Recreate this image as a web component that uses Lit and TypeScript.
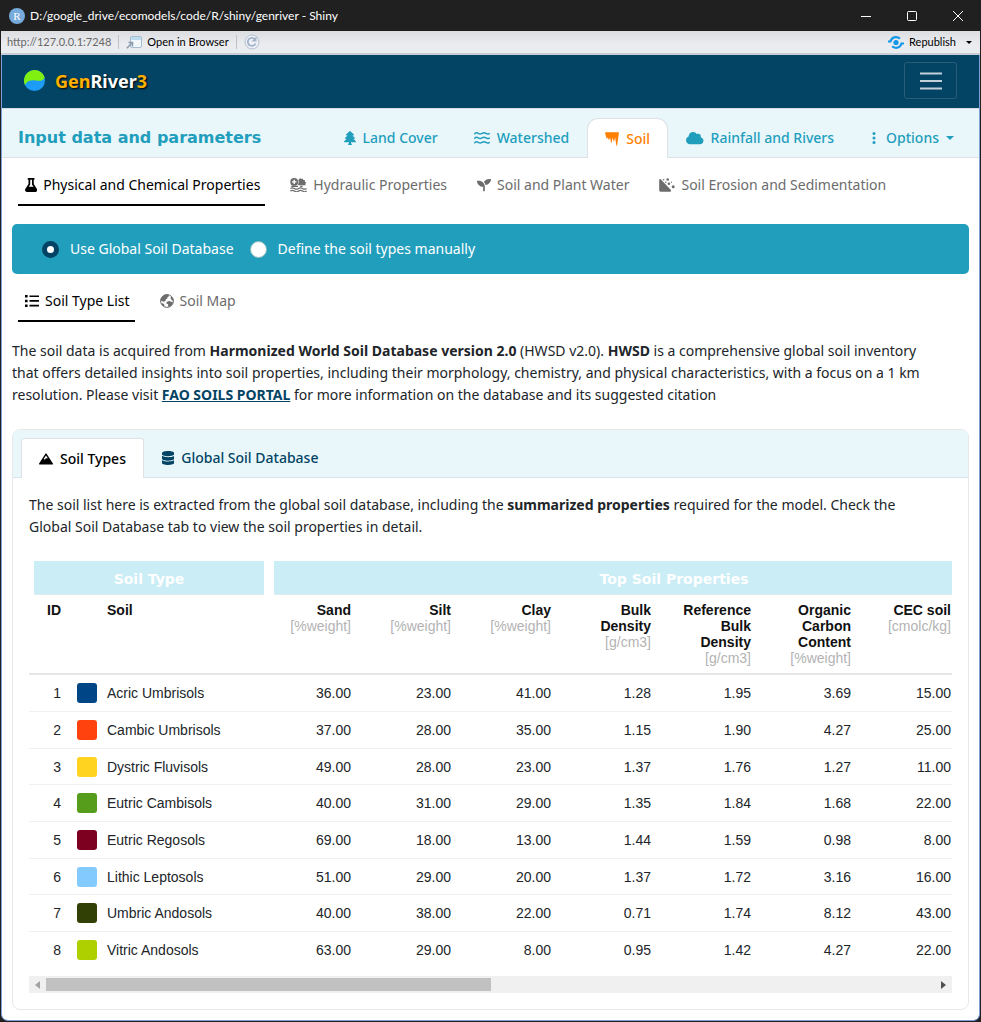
import { LitElement, html, svg, css } from "lit";
import { customElement, property } from "lit/decorators.js";
import { styleMap } from "lit/directives/style-map.js";

const ICONS: Record<string, { box: string; body: unknown }> = {
  tree: {
    box: "0 0 438 512",
    body: svg`<path transform="scale(1.14 1)" d="M378.31 378.49L298.42 288h30.63c9.01 0 16.98-5 20.78-13.06 3.8-8.04 2.55-17.26-3.28-24.05L268.42 160h28.89c9.1 0 17.3-5.35 20.86-13.61 3.52-8.13 1.86-17.59-4.24-24.08L203.66 4.83c-6.03-6.45-17.28-6.45-23.32 0L70.06 122.31c-6.1 6.49-7.75 15.95-4.24 24.08C69.38 154.65 77.59 160 86.69 160h28.89l-78.14 90.91c-5.81 6.78-7.06 15.99-3.27 24.04C37.97 283 45.93 288 54.95 288h30.63L5.69 378.49c-6 6.79-7.36 16.09-3.56 24.26 3.75 8.05 12 13.25 21.01 13.25H160v24.45l-30.29 48.4c-5.32 10.64 2.42 23.16 14.31 23.16h95.96c11.89 0 19.63-12.52 14.31-23.16L224 440.45V416h136.86c9.01 0 17.26-5.2 21.01-13.25 3.8-8.17 2.44-17.47-3.56-24.26z"/>`,
  },
  water: {
    box: "0 0 16 14",
    body: svg`<g fill="none" stroke="currentColor" stroke-width="1.5"><path d="M.3 3.200C1.700 1.500 2.900 1.500 4.200 2.400S6.700 3.300 8 2.400 10.600 1.500 11.900 2.400 14.400 3.300 15.700 2.200"/><path d="M.3 7.700C1.700 6 2.900 6 4.200 6.900S6.700 7.800 8 6.900 10.600 6 11.900 6.900 14.400 7.800 15.700 6.700"/><path d="M.3 12.200C1.700 10.500 2.900 10.500 4.200 11.400S6.700 12.300 8 11.400 10.600 10.500 11.900 11.400 14.400 12.300 15.700 11.200"/></g>`,
  },
  icicles: {
    box: "0 0 14 14",
    body: svg`<path d="M.7.300H13.300C13.800.300 14 .7 13.900 1.100L12.100 13.500C12 14 11.500 14 11.400 13.500L10.100 5.500 9.200 8.700C9.100 9.200 8.600 9.200 8.500 8.700L7.700 5.600 6.700 10.500C6.600 11 6.100 11 6 10.500L5.100 5.600 4.300 7.600C4.200 8 3.700 8 3.600 7.600L2.900 5.500 2.300 6.300C2 6.600 1.700 6.500 1.600 6.200L0 1.100C0 .7.300.300.7.300Z"/>`,
  },
  cloud: {
    box: "0 0 640 512",
    body: svg`<path d="M537.6 226.6c4.1-10.700 6.400-22.400 6.400-34.600 0-53-43-96-96-96-19.700 0-38.100 6-53.300 16.200C367 64.200 315.300 32 256 32c-88.400 0-160 71.600-160 160 0 2.700.1 5.400.2 8.100C40.200 219.800 0 273.200 0 336c0 79.500 64.500 144 144 144h368c70.700 0 128-57.300 128-128 0-61.900-44-113.600-102.400-125.400z"/>`,
  },
  dots: {
    box: "0 0 9 14",
    body: svg`<circle cx="4" cy="2.500" r="1.500"/><circle cx="4" cy="7" r="1.500"/><circle cx="4" cy="11.500" r="1.500"/>`,
  },
  flask: {
    box: "0 0 448 512",
    body: svg`<path d="M437.2 403.500L320 215V64h8c13.300 0 24-10.700 24-24V24c0-13.300-10.700-24-24-24H120c-13.300 0-24 10.700-24 24v16c0 13.300 10.700 24 24 24h8v151L10.800 403.500C-18.500 450.600 15.300 512 70.900 512h306.200c55.700 0 89.400-61.500 60.100-108.500zM137.900 320l48.200-77.600c3.700-5.200 5.800-11.600 5.800-18.400V64h64v160c0 6.900 2.200 13.200 5.800 18.400l48.200 77.600H137.900z"/>`,
  },
  hydraulic: {
    box: "0 0 17 14",
    body: svg`<path fill-rule="evenodd" d="M4.200 0A3.900 3.900 0 1 1 4.200 7.800 3.900 3.900 0 0 1 4.200 0ZM3.500 1.700V3.200H2V4.600H3.500V6.100H4.900V4.600H6.400V3.200H4.900V1.700Z"/><path d="M8.800 1.200 10 .3 11.300 1 12.700.5 13.300 1.900 15 2.300 14.900 3.700 16.300 4.500 15.400 5.700 15.600 7.200H8.600L7.900 6.500 8.700 4.500 8.400 2.500Z"/><path d="M1.600 7.700H8V9H1.200ZM10.200 7.700H12.600V9H10.200Z"/><path fill="none" stroke="currentColor" stroke-width="1.200" d="M.4 10.500c1.400-1 2.600-1 4 0s2.700 1 4.100 0 2.700-1 4.100 0 2.600 1 4 0M.4 13.100c1.400-1 2.600-1 4 0s2.700 1 4.100 0 2.700-1 4.100 0 2.600 1 4 0"/>`,
  },
  seedling: {
    box: "0 0 512 512",
    body: svg`<path d="M64 96H0c0 123.700 100.300 224 224 224v144c0 8.800 7.200 16 16 16h32c8.800 0 16-7.200 16-16V320C288 196.300 187.700 96 64 96zm384-64c-84.200 0-157.400 46.500-195.700 115.200 27.700 30.200 48.200 66.900 59 107.600C424 243.100 512 147.900 512 32h-64z"/>`,
  },
  erosion: {
    box: "0 0 16 14",
    body: svg`<path d="M.2 1.800C.2.900 1.100.700 1.700 1.300L11.700 11.700C12.500 12.600 12.100 13.700 11 13.700H1.600C.8 13.700.2 13.100.2 12.300Z"/><circle cx="4.600" cy="1.700" r=".8"/><circle cx="8.700" cy="1.500" r="1.300"/><circle cx="6.700" cy="4.300" r=".8"/><circle cx="9.900" cy="5.800" r="1.300"/><circle cx="14.200" cy="8.800" r="1.500"/><circle cx="12.400" cy="4.200" r=".6"/>`,
  },
  list: {
    box: "0 -1 14 14",
    body: svg`<path d="M0 0h2.600v2.600H0ZM0 4.700h2.600v2.600H0ZM0 9.400h2.600V12H0ZM4.500.4H14v1.700H4.500ZM4.500 5.100H14v1.700H4.500ZM4.500 9.800H14v1.700H4.500Z"/>`,
  },
  globe: {
    box: "0 0 14 14",
    body: svg`<circle cx="7" cy="7" r="6.400" fill="none" stroke="currentColor" stroke-width="1"/><path d="M.6 6.400C.9 3 3.700.500 7 .5L8.900.8 8.700 2.600 7.300 3.400 7.200 4.800 5.800 5.300 5.600 6.800 4 7.700 2.400 7.300ZM11.300 2 13.300 5.300 13.400 7 11.800 6.200 10.600 4.600ZM1.200 9.500 3 9.300 4.300 10.600 4.400 12.700 2.600 11.700ZM6.500 8 9.200 6.900 11.300 7.800 13.200 8.600 11.500 11.600 8.900 13 7.900 11.700 8.300 10.200 6.600 9.700Z"/>`,
  },
  mountain: {
    box: "0 -64 640 640",
    body: svg`<path d="M634.920 462.700l-288-448C341.030 5.540 330.890 0 320 0s-21.030 5.540-26.920 14.700l-288 448a32.001 32.001 0 0 0-1.170 32.640A32.004 32.004 0 0 0 32 512h576c11.710 0 22.480-6.390 28.090-16.670a31.983 31.983 0 0 0-1.170-32.630zM320 91.180L405.390 224H320l-64 64-38.060-38.060L320 91.180z"/>`,
  },
  database: {
    box: "0 0 448 512",
    body: svg`<path d="M448 73.143v45.714C448 159.143 347.667 192 224 192S0 159.143 0 118.857V73.143C0 32.857 100.333 0 224 0s224 32.857 224 73.143zM448 176v102.857C448 319.143 347.667 352 224 352S0 319.143 0 278.857V176c48.125 33.143 136.208 48.572 224 48.572S399.874 209.143 448 176zm0 160v102.857C448 479.143 347.667 512 224 512S0 479.143 0 438.857V336c48.125 33.143 136.208 48.572 224 48.572S399.874 369.143 448 336z"/>`,
  },
};

@customElement("ui-icon")
export class UiIcon extends LitElement {
  @property() name = "";
  static styles = css`
    :host { display: inline-flex; flex: none; height: 14px; }
    svg { display: block; height: 100%; width: auto; fill: currentColor; }
  `;
  render() {
    const icon = ICONS[this.name];
    return icon ? html`<svg viewBox=${icon.box} aria-hidden="true">${icon.body}</svg>` : null;
  }
}

interface Soil { name: string; color: string; values: string[] }

const SOILS: Soil[] = [
  { name: "Acric Umbrisols", color: "#004586", values: ["36.00", "23.00", "41.00", "1.28", "1.95", "3.69", "15.00"] },
  { name: "Cambic Umbrisols", color: "#ff420e", values: ["37.00", "28.00", "35.00", "1.15", "1.90", "4.27", "25.00"] },
  { name: "Dystric Fluvisols", color: "#ffd320", values: ["49.00", "28.00", "23.00", "1.37", "1.76", "1.27", "11.00"] },
  { name: "Eutric Cambisols", color: "#579d1c", values: ["40.00", "31.00", "29.00", "1.35", "1.84", "1.68", "22.00"] },
  { name: "Eutric Regosols", color: "#7e0021", values: ["69.00", "18.00", "13.00", "1.44", "1.59", "0.98", "8.00"] },
  { name: "Lithic Leptosols", color: "#83caff", values: ["51.00", "29.00", "20.00", "1.37", "1.72", "3.16", "16.00"] },
  { name: "Umbric Andosols", color: "#314004", values: ["40.00", "38.00", "22.00", "0.71", "1.74", "8.12", "43.00"] },
  { name: "Vitric Andosols", color: "#aecf00", values: ["63.00", "29.00", "8.00", "0.95", "1.42", "4.27", "22.00"] },
];

const COLUMNS = [
  ["Sand", "[%weight]"],
  ["Silt", "[%weight]"],
  ["Clay", "[%weight]"],
  ["Bulk Density", "[g/cm3]"],
  ["Reference Bulk Density", "[g/cm3]"],
  ["Organic Carbon Content", "[%weight]"],
  ["CEC soil", "[cmolc/kg]"],
];

@customElement("soil-table")
export class SoilTable extends LitElement {
  static styles = css`
    :host { display: block; font: 14px/16px "Liberation Sans", Arial, sans-serif; color: #212529; }
    .view { overflow: hidden; }
    table { border-collapse: collapse; table-layout: fixed; width: 1050px; }
    .c-id { width: 40px; }
    .c-swatch { width: 30px; }
    .c-soil { width: 170px; }
    .c-first { width: 90px; }
    .c-value { width: 100px; }
    .c-last { width: 120px; }
    th { padding: 0; vertical-align: top; }
    .group { padding: 0 5px; }
    .group span {
      display: block; padding: 10px 0 6px; line-height: 17px;
      background: #caedf6; border-bottom: 1px solid #dfe8ea; color: #fff;
      font-family: "Arial Black", "DejaVu Sans", sans-serif; font-weight: 900;
    }
    .labels th { padding: 7px 8px; text-align: right; color: #111; border-bottom: 2px solid #e6e6e6; }
    .labels .left { text-align: left; }
    .unit { display: block; font-weight: 400; color: #b3b3b3; }
    td { height: 36px; padding: 0 8px; text-align: right; border-bottom: 1px solid #f0f0f0; }
    tr:nth-child(3n) td { height: 35px; }
    tr:last-child td { border-bottom: 0; }
    .name { text-align: left; }
    .swatch { display: block; width: 20px; height: 20px; border-radius: 3px; }
    .bar { display: flex; align-items: center; height: 17px; margin-top: 8px; background: #f0f0f0; }
    .bar button { width: 17px; height: 17px; padding: 0; border: 0; background: none; display: grid; place-items: center; color: #505050; }
    .bar .prev { color: #a3a3a3; }
    .bar svg { width: 5px; height: 8px; fill: currentColor; }
    .track { flex: 1; }
    .thumb { width: 50%; height: 13px; background: #c1c1c1; }
  `;
  render() {
    return html`
      <div class="view">
        <table>
          <colgroup>
            <col class="c-id" /><col class="c-swatch" /><col class="c-soil" /><col class="c-first" />
            ${COLUMNS.slice(1).map(() => html`<col class="c-value" />`)}
            <col class="c-last" />
          </colgroup>
          <thead>
            <tr>
              <th class="group" colspan="3" scope="colgroup"><span>Soil Type</span></th>
              <th class="group" colspan="8" scope="colgroup"><span>Top Soil Properties</span></th>
            </tr>
            <tr class="labels">
              <th scope="col">ID</th>
              <th></th>
              <th class="left" scope="col">Soil</th>
              ${COLUMNS.map(([name, unit]) => html`<th scope="col">${name}<span class="unit">${unit}</span></th>`)}
              <th></th>
            </tr>
          </thead>
          <tbody>
            ${SOILS.map((soil, i) => html`<tr>
              <td>${i + 1}</td>
              <td><span class="swatch" style=${styleMap({ background: soil.color })}></span></td>
              <td class="name">${soil.name}</td>
              ${soil.values.map((v) => html`<td>${v}</td>`)}
              <td></td>
            </tr>`)}
          </tbody>
        </table>
      </div>
      <div class="bar">
        <button class="prev" aria-label="Scroll left"><svg viewBox="0 0 5 8"><path d="M5 0v8L0 4z" /></svg></button>
        <div class="track"><div class="thumb"></div></div>
        <button aria-label="Scroll right"><svg viewBox="0 0 5 8"><path d="M0 0v8l5-4z" /></svg></button>
      </div>
    `;
  }
}

@customElement("app-root")
export class AppRoot extends LitElement {
  static styles = css`
    :host {
      display: block; min-height: 100vh; box-sizing: border-box; background: #202020; color: #212529;
      font: 14px/22px "Noto Sans", "Open Sans", sans-serif;
    }
    * { box-sizing: border-box; }
    button { font: inherit; color: inherit; background: none; border: 0; padding: 0; }
    a { color: inherit; text-decoration: none; }
    p { margin: 0; }
    .titlebar { display: flex; align-items: center; height: 31px; padding-left: 9px; color: #fff; font: 12px/16px "Segoe UI", Lato, sans-serif; background: #202020; }
    .titlebar .r { width: 16px; height: 16px; margin-right: 5px; border-radius: 50%; background: #75aadb; text-align: center; font-family: "Liberation Serif", serif; font-size: 11px; }
    .titlebar .title { flex: 1; }
    .titlebar button { width: 46px; height: 31px; display: grid; place-items: center; }
    .titlebar svg { width: 12px; height: 12px; fill: none; stroke: #fff; }
    .toolbar { display: flex; align-items: center; height: 24px; padding: 0 8px 0 6px; margin: 0 1px; font: 11px/16px "Segoe UI", Lato, sans-serif; color: #000; background: linear-gradient(#dcdde0, #ebecef 60%, #ebecef); border-bottom: 2px solid #c9cdd6; }
    .toolbar .url { color: #666; }
    .toolbar .sep { width: 1px; height: 14px; background: #bfc1c5; margin: 0 7px; }
    .toolbar button { display: flex; align-items: center; gap: 5px; }
    .toolbar .fill { flex: 1; }
    .toolbar svg { display: block; }
    .caret { display: inline-block; border: 3px solid transparent; border-top-color: currentColor; border-bottom: 0; }
    .toolbar .caret { margin-left: 5px; }
    .page { margin: 0 1px 1px; border: 1px solid #7f9fd8; border-top: 0; border-radius: 0 0 7px 7px; background: #fff; padding-bottom: 10px; overflow: hidden; }
    .navbar { display: flex; align-items: center; justify-content: space-between; height: 53px; padding: 0 22px 2px; background: #034464; }
    .brand { display: flex; align-items: center; gap: 10px; font-size: 18px; font-weight: 700; color: #fff; text-shadow: 1px 1px 2px #000; }
    .brand em { font-style: normal; color: #ffb000; }
    .menu { width: 53px; height: 37px; border: 1px solid #285c78; border-radius: 3px; display: grid; place-items: center; }
    .header { display: flex; align-items: flex-end; justify-content: space-between; height: 50px; padding: 0 7px 0 16px; border-top: 1px solid #d8dde2; border-bottom: 1px solid #dee2e6; background: #e9f7fb; color: #229ebd; }
    h1 { margin: 0; font: 900 16px/38px "Arial Black", "DejaVu Sans", sans-serif; }
    .tabs { display: flex; font-weight: 500; }
    .tab { display: flex; align-items: center; gap: 7px; height: 39px; padding: 0 17px; border: 1px solid transparent; border-bottom: 0; }
    .tab.active { height: 40px; margin-bottom: -1px; border-color: #dee2e6; background: #fff; color: #ff7f00; border-radius: 11px 11px 0 0; }
    .header .caret { border-width: 4px; border-bottom: 0; }
    .underline { display: flex; gap: 18px; padding: 6px 16px 0; color: #6c6c6c; }
    .underline a { display: flex; align-items: center; gap: 6px; height: 42px; padding: 1px 5px 0 7px; border-bottom: 2px solid transparent; }
    .underline .on { color: #000; border-color: #000; }
    .banner { display: flex; align-items: center; height: 50px; margin: 18px 10px 0; padding-left: 30px; border-radius: 5px; background: #229ebd; color: #fff; }
    .banner label { display: flex; align-items: center; gap: 11px; margin-right: 16px; }
    .banner input { appearance: none; width: 17px; height: 17px; margin: 0; border: 1px solid #8bb; border-radius: 50%; background: #fff; }
    .banner input:checked { border: 5px solid #034464; }
    .intro { margin: 18px 40px 23px 10px; }
    .intro a { color: #034464; font-weight: 700; text-decoration: underline; }
    .card { margin: 0 10px; border: 1px solid #e6e9eb; border-radius: 8px; overflow: hidden; }
    .card-head { display: flex; align-items: flex-end; height: 48px; padding-left: 8px; border-bottom: 1px solid #d5e6eb; background: #e9f7fb; color: #034464; }
    .card-head .active { color: #000; border-radius: 3px 3px 0 0; }
    .card-body { padding: 16px; }
    .card-body p { margin: 0 20px 23px 0; }
  `;

  render() {
    return html`
      <div class="titlebar">
        <span class="r">R</span>
        <span class="title">D:/google_drive/ecomodels/code/R/shiny/genriver - Shiny</span>
        <button aria-label="Minimize"><svg viewBox="0 0 12 12"><path d="M1 6.500h10" /></svg></button>
        <button aria-label="Maximize"><svg viewBox="0 0 12 12"><rect x="1.500" y="1.500" width="9" height="9" rx="1" /></svg></button>
        <button aria-label="Close"><svg viewBox="0 0 12 12"><path d="M1 1l10 10M11 1L1 11" /></svg></button>
      </div>
      <div class="toolbar">
        <span class="url">http://127.0.0.1:7248</span><span class="sep"></span>
        <button>
          <svg width="16" height="13" viewBox="0 0 16 13"><rect x="4.500" y=".5" width="11" height="11" rx="1.500" fill="#f2f7fb" stroke="#a9bdd0" /><path d="M5 1h10v3H5z" fill="#bcdcf0" /><path d="M.8 12.200 5.500 7.500M2.500 6.500h4v4" fill="none" stroke="#8a9bab" stroke-width="1.500" /></svg>
          Open in Browser
        </button>
        <span class="sep"></span>
        <button aria-label="Reload">
          <svg width="16" height="16" viewBox="0 0 16 16"><circle cx="8" cy="8" r="7" fill="#eef2f8" stroke="#b4bfcf" /><path d="M11.500 9.500A4 4 0 1 1 11 5.500" fill="none" stroke="#a3b1c7" stroke-width="1.800" /><path d="M12.500 2.500v5H7.500z" fill="#a3b1c7" /></svg>
        </button>
        <span class="fill"></span>
        <button>
          <svg width="16" height="13" viewBox="0 0 16 13"><circle cx="8" cy="6.500" r="2.600" fill="#1197e8" /><path d="M0 5.500h2.500C3.500 2.300 5.500 1.200 8 1.200c1.700 0 2.900.5 3.900 1.500M16 7.500h-2.500C12.500 10.700 10.500 11.800 8 11.800c-1.700 0-2.900-.5-3.900-1.500" fill="none" stroke="#1197e8" stroke-width="2.200" /></svg>
          Republish <span class="caret"></span>
        </button>
      </div>
      <main class="page">
        <nav class="navbar">
          <a class="brand" href="#">
            <svg width="21" height="21" viewBox="0 0 21 21"><circle cx="10.500" cy="10.500" r="10.500" fill="#1c9cf6" /><path d="M1 15A10.500 10.500 0 1 1 20.700 8C18.500 11.300 15 11 12 10.500 7 9.800 3 11 1 15Z" fill="#80f010" /></svg>
            <span><em>Gen</em>River<em>3</em></span>
          </a>
          <button class="menu" aria-label="Toggle navigation">
            <svg width="22" height="18" viewBox="0 0 22 18"><path d="M0 1.500h22M0 9h22M0 16.500h22" stroke="#c3d2da" stroke-width="2" /></svg>
          </button>
        </nav>
        <header class="header">
          <h1>Input data and parameters</h1>
          <nav class="tabs">
            <a class="tab" href="#"><ui-icon name="tree"></ui-icon>Land Cover</a>
            <a class="tab" href="#"><ui-icon name="water"></ui-icon>Watershed</a>
            <a class="tab active" href="#"><ui-icon name="icicles"></ui-icon>Soil</a>
            <a class="tab" href="#"><ui-icon name="cloud"></ui-icon>Rainfall and Rivers</a>
            <a class="tab" href="#"><ui-icon name="dots"></ui-icon>Options <span class="caret"></span></a>
          </nav>
        </header>
        <nav class="underline">
          <a class="on" href="#"><ui-icon name="flask"></ui-icon>Physical and Chemical Properties</a>
          <a href="#"><ui-icon name="hydraulic"></ui-icon>Hydraulic Properties</a>
          <a href="#"><ui-icon name="seedling"></ui-icon>Soil and Plant Water</a>
          <a href="#"><ui-icon name="erosion"></ui-icon>Soil Erosion and Sedimentation</a>
        </nav>
        <div class="banner">
          <label><input type="radio" name="source" checked />Use Global Soil Database</label>
          <label><input type="radio" name="source" />Define the soil types manually</label>
        </div>
        <nav class="underline">
          <a class="on" href="#"><ui-icon name="list"></ui-icon>Soil Type List</a>
          <a href="#"><ui-icon name="globe"></ui-icon>Soil Map</a>
        </nav>
        <p class="intro">
          The soil data is acquired from <b>Harmonized World Soil Database version 2.0</b> (HWSD v2.0). <b>HWSD</b> is a
          comprehensive global soil inventory that offers detailed insights into soil properties, including their
          morphology, chemistry, and physical characteristics, with a focus on a 1 km resolution. Please visit
          <a href="#">FAO SOILS PORTAL</a> for more information on the database and its suggested citation
        </p>
        <section class="card">
          <div class="card-head">
            <nav class="tabs">
              <a class="tab active" href="#"><ui-icon name="mountain"></ui-icon>Soil Types</a>
              <a class="tab" href="#"><ui-icon name="database"></ui-icon>Global Soil Database</a>
            </nav>
          </div>
          <div class="card-body">
            <p>
              The soil list here is extracted from the global soil database, including the
              <b>summarized properties</b> required for the model. Check the Global Soil Database tab to view the soil
              properties in detail.
            </p>
            <soil-table></soil-table>
          </div>
        </section>
      </main>
    `;
  }
}
